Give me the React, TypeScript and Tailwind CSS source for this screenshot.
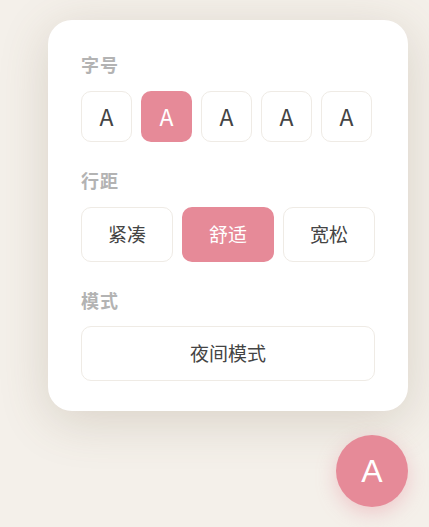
import { useState } from "react";

const FONT = '"Noto Sans CJK SC", "Noto Sans", sans-serif';

const SIZES = [0, 1, 2, 3, 4];
const SPACINGS = ["紧凑", "舒适", "宽松"];

export default function App() {
  const [size, setSize] = useState(1);
  const [spacing, setSpacing] = useState(1);
  const [night, setNight] = useState(false);

  return (
    <div
      className="relative h-[527px] w-[429px] overflow-hidden bg-[#f4f0ea]"
      style={{ fontFamily: FONT }}
    >
      {/* 阅读设置弹层 */}
      <div className="absolute left-[48px] top-[20px] w-[360px] rounded-[24px] bg-white px-[33px] pt-[32px] pb-[30px] shadow-[0_10px_50px_rgba(110,90,60,0.2)]">
        <p className="text-[18px] font-bold leading-[24px] tracking-[1px] text-[#b3b3b3]">字号</p>
        <div className="mt-[15px] flex gap-[9px]">
          {SIZES.map((i) => (
            <button
              key={i}
              onClick={() => setSize(i)}
              className={
                i === size
                  ? "flex h-[51px] w-[51px] items-center justify-center rounded-[10px] bg-[#e68a98] text-[23px] text-white"
                  : "flex h-[51px] w-[51px] items-center justify-center rounded-[10px] border border-[#efebe5] bg-white text-[23px] text-[#444]"
              }
            >
              A
            </button>
          ))}
        </div>

        <p className="mt-[26px] text-[18px] font-bold leading-[24px] tracking-[1px] text-[#b3b3b3]">行距</p>
        <div className="mt-[15px] grid grid-cols-3 gap-[9px]">
          {SPACINGS.map((s, i) => (
            <button
              key={s}
              onClick={() => setSpacing(i)}
              className={
                i === spacing
                  ? "h-[55px] rounded-[10px] bg-[#e68a98] text-[19px] text-white"
                  : "h-[55px] rounded-[10px] border border-[#efebe5] bg-white text-[19px] text-[#444]"
              }
            >
              {s}
            </button>
          ))}
        </div>

        <p className="mt-[26px] text-[18px] font-bold leading-[24px] tracking-[1px] text-[#b3b3b3]">模式</p>
        <button
          onClick={() => setNight(!night)}
          className="mt-[14px] h-[55px] w-full rounded-[10px] border border-[#efebe5] bg-white text-[19px] text-[#444]"
        >
          夜间模式
        </button>
      </div>

      <button
        className="absolute right-[21px] bottom-[20px] flex h-[72px] w-[72px] items-center justify-center rounded-full bg-[#e68a98] text-[32px] text-white shadow-[0_6px_20px_rgba(230,138,152,0.4)]"
        style={{ fontFamily: '"Liberation Sans", Arial, sans-serif' }}
      >
        A
      </button>
    </div>
  );
}
